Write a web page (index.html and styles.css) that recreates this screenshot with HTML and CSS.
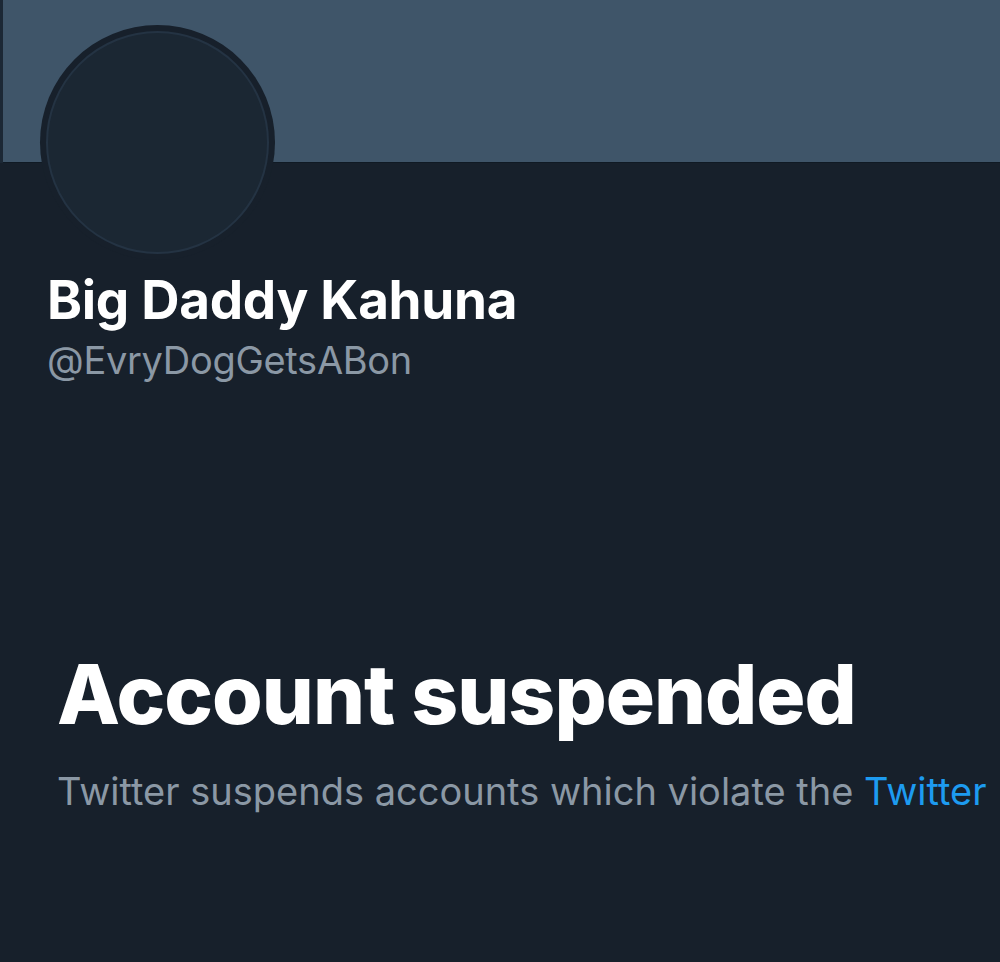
FILE: index.html
```html
<!DOCTYPE html>
<html lang="en">
<head>
<meta charset="utf-8">
<title>Account suspended</title>
<link rel="stylesheet" href="styles.css">
</head>
<body>
<div class="page">
  <div class="banner"></div>
  <div class="profile">
    <div class="avatar"><div class="avatar-inner"></div></div>
    <h1 class="name">Big Daddy Kahuna</h1>
    <div class="handle">@EvryDogGetsABon</div>
  </div>
  <div class="notice">
    <h2 class="title">Account suspended</h2>
    <p class="desc">Twitter suspends accounts which violate the <a class="link" href="#">Twitter</a></p>
  </div>
</div>
</body>
</html>
```

FILE: styles.css
```css
html, body {
  margin: 0;
  padding: 0;
  background: #17202b;
}
.page {
  width: 1000px;
  height: 962px;
  overflow: hidden;
  font-family: Inter, "Noto Sans", sans-serif;
  background: #17202b;
}
.banner {
  height: 162px;
  margin-left: 3px;
  background: #3f5569;
  border-bottom: 1px solid #101a24;
  box-shadow: -3px 0 0 #1c2835;
}
.profile {
  padding-left: 40px;
}
.avatar {
  width: 235px;
  height: 235px;
  margin-top: -138px;
  border-radius: 50%;
  background: #17202b;
  padding: 6px;
  box-sizing: border-box;
}
.avatar-inner {
  width: 100%;
  height: 100%;
  border-radius: 50%;
  background: #1b2733;
  border: 2px solid #243343;
  box-sizing: border-box;
}
.name {
  margin: 10px 0 0 7px;
  font-size: 53px;
  font-weight: 700;
  color: #ffffff;
  line-height: 60px;
  letter-spacing: -0.3px;
}
.handle {
  margin: 8px 0 0 7px;
  font-size: 38px;
  color: #8b98a5;
  line-height: 44px;
  letter-spacing: -0.3px;
}
.notice {
  padding: 263px 0 0 57px;
}
.title {
  margin: 0;
  font-size: 82px;
  font-weight: 800;
  color: #ffffff;
  line-height: 100px;
  letter-spacing: -1px;
}
.desc {
  margin: 21px 0 0 0;
  font-size: 38px;
  color: #8b98a5;
  line-height: 50px;
  white-space: nowrap;
}
.link {
  color: #1d9bf0;
  text-decoration: none;
}
```
